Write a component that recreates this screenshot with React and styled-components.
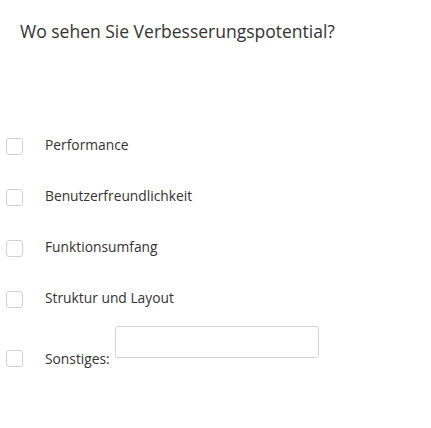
import React from 'react';
import styled, { createGlobalStyle } from 'styled-components';

const GlobalStyle = createGlobalStyle`
  body {
    margin: 0;
    background: #fff;
    font-family: "Open Sans", "Noto Sans", sans-serif;
    color: #333;
  }
`;

const Page = styled.div`
  width: 431px;
  height: 428px;
  padding: 21px 0 0 0;
  box-sizing: border-box;
`;

const Question = styled.h2`
  margin: 0 0 0 20px;
  font-size: 17.5px;
  font-weight: 400;
  line-height: 20px;
  color: #333;
`;

const Options = styled.div`
  display: flex;
  flex-direction: column;
  margin-top: 80px;
`;

const Row = styled.label`
  display: flex;
  align-items: center;
  height: 51px;
  padding-left: 6px;
  font-size: 13.8px;
  cursor: pointer;
`;

const Box = styled.span`
  flex: none;
  width: 15px;
  height: 15px;
  border: 1px solid #d0d0d0;
  border-radius: 3px;
  background: #fff;
  margin-right: 22px;
`;

const Text = styled.span`
  line-height: 16px;
  padding-bottom: ${(p) => (p.$bottom ? '0' : '4px')};
`;

const Other = styled.input`
  width: 204px;
  height: 32px;
  box-sizing: border-box;
  margin: 0 0 9px 5px;
  border: 1px solid #d4d4d4;
  border-radius: 3px;
  outline: none;
`;

const BottomRow = styled.label`
  display: flex;
  align-items: flex-end;
  padding-left: 6px;
  margin-top: 1px;
  font-size: 13.8px;
`;

const options = ['Performance', 'Benutzerfreundlichkeit', 'Funktionsumfang', 'Struktur und Layout'];

export default function App() {
  return (
    <Page>
      <GlobalStyle />
      <Question>Wo sehen Sie Verbesserungspotential?</Question>
      <Options>
        {options.map((o) => (
          <Row key={o}>
            <Box />
            <Text>{o}</Text>
          </Row>
        ))}
        <BottomRow>
          <Box />
          <Text $bottom>Sonstiges:</Text>
          <Other type="text" />
        </BottomRow>
      </Options>
    </Page>
  );
}
